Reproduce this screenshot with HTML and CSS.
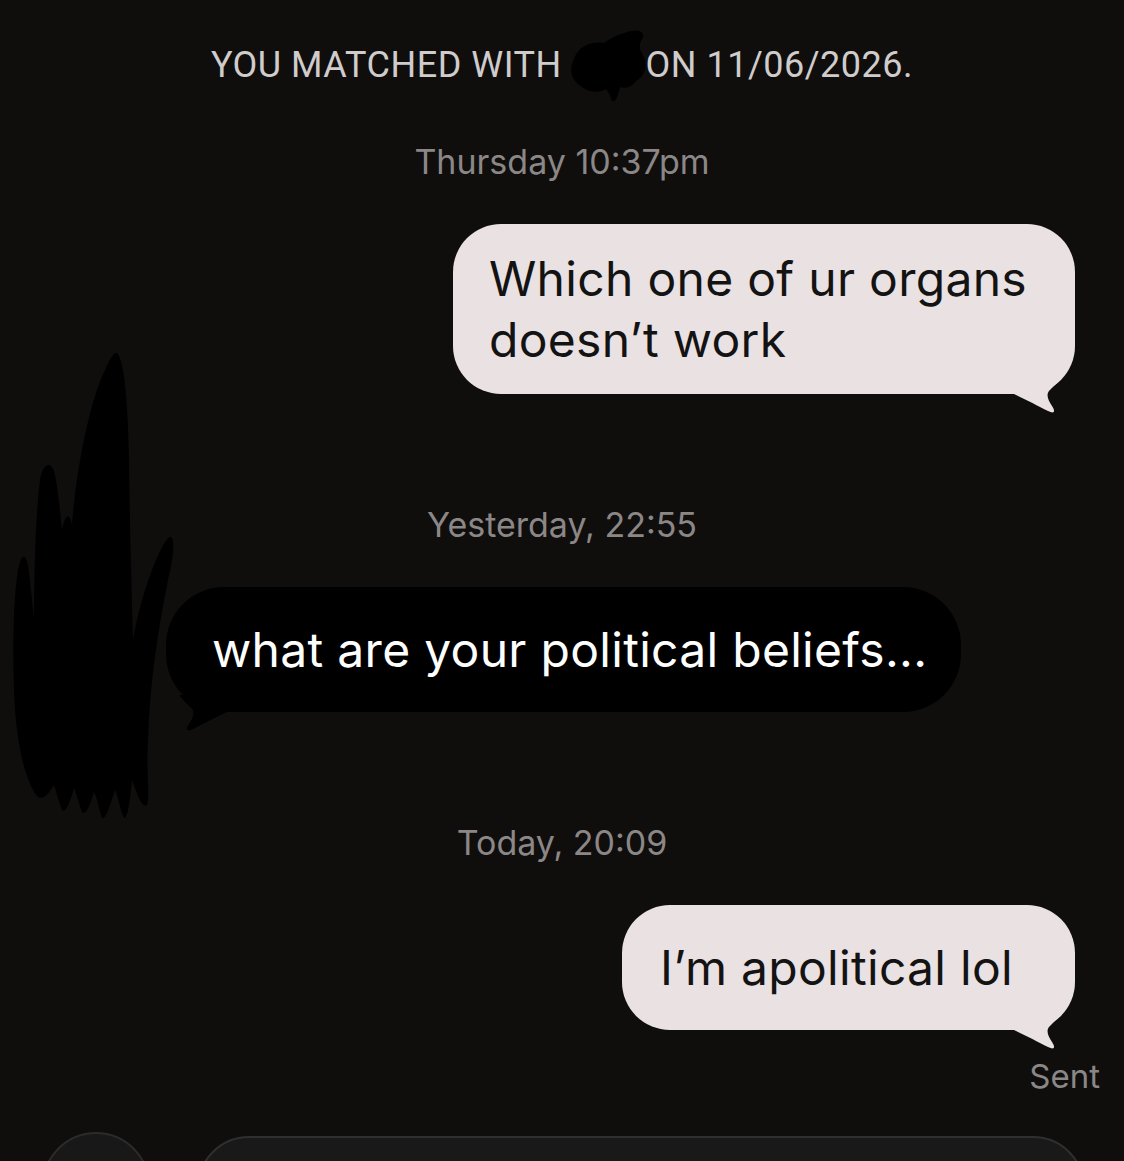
FILE: index.html
```html
<!DOCTYPE html>
<html lang="en">
<head>
    <meta charset="UTF-8">
    <meta name="viewport" content="width=device-width, initial-scale=1.0">
    <title>Chat</title>
    <link rel="stylesheet" href="styles.css">
</head>
<body>
    <div class="chat">
        <p class="match-note">YOU MATCHED WITH<span class="name-redact"><svg viewBox="0 0 90 76" width="90" height="76"><path d="M14,30 C18,18 30,12 44,14 C52,8 62,4 72,2 C80,0 86,4 82,10 C78,16 80,22 84,28 C88,38 84,48 76,52 C72,58 66,60 60,58 C58,66 56,74 52,72 C50,66 48,62 46,60 C40,64 30,64 22,58 C12,52 8,42 14,30 Z" fill="#000"/></svg></span>ON 11/06/2026.</p>

        <p class="stamp">Thursday 10:37pm</p>
        <div class="row row-sent">
            <div class="bubble bubble-sent bubble-tall">
                Which one of ur organs<br>doesn&rsquo;t work
                <svg class="tail tail-sent" viewBox="0 0 66 46" width="66" height="46"><path d="M0,23 L14,23 C25,28 38,35 48,40 C54,43 56,41 52,35 C48,29 46,24 49,20 C53,16 58,11 62,6 L0,6 Z"/></svg>
            </div>
        </div>

        <p class="stamp stamp-gap">Yesterday, 22:55</p>
        <div class="row row-received">
            <div class="bubble bubble-received">
                what are your political beliefs...
                <svg class="tail tail-received" viewBox="0 0 66 46" width="66" height="46"><path d="M66,23 L52,23 C41,28 28,35 18,40 C12,43 10,41 14,35 C18,29 20,24 17,20 C13,16 8,11 4,6 L66,6 Z"/></svg>
            </div>
        </div>

        <p class="stamp stamp-gap">Today, 20:09</p>
        <div class="row row-sent">
            <div class="bubble bubble-sent bubble-short">
                I&rsquo;m apolitical lol
                <svg class="tail tail-sent" viewBox="0 0 66 46" width="66" height="46"><path d="M0,23 L14,23 C25,28 38,35 48,40 C54,43 56,41 52,35 C48,29 46,24 49,20 C53,16 58,11 62,6 L0,6 Z"/></svg>
            </div>
        </div>
        <p class="status">Sent</p>

        <div class="composer">
            <div class="composer-btn"></div>
            <div class="composer-input"></div>
        </div>
    </div>

    <!-- redaction over the profile picture -->
    <svg class="avatar-redact" viewBox="0 0 200 490" width="200" height="490">
        <path d="M117,13 C124,20 128,60 129,120 C130,200 132,260 133,300 C140,260 155,215 168,198 C176,192 174,215 168,240 C158,290 150,340 148,400 C146,430 150,455 147,465 C142,470 136,450 132,440 C130,460 128,478 124,478 C120,470 118,455 115,450 C110,465 106,480 102,478 C98,465 96,455 94,452 C90,465 86,476 82,472 C78,460 76,452 74,448 C70,462 66,474 62,470 C58,460 56,450 54,445 C48,455 42,462 36,455 C26,440 18,410 15,370 C12,320 13,260 18,230 C21,215 25,212 28,225 C30,240 32,260 34,280 C34,230 36,170 40,140 C43,122 52,120 55,135 C58,150 60,170 62,190 C66,170 70,175 72,185 C76,130 90,60 105,30 C110,18 114,12 117,13 Z" fill="#000"/>
    </svg>
</body>
</html>
```

FILE: styles.css
```css
body {
    margin: 0;
    background-color: #0f0e0d;
    font-family: "Inter", "Roboto", sans-serif;
    overflow: hidden;
    height: 1161px;
}
.chat {
    display: flex;
    flex-direction: column;
    padding-top: 45px;
}
.match-note {
    margin: 0;
    text-align: center;
    font-family: "Roboto", sans-serif;
    font-size: 36px;
    line-height: 40px;
    letter-spacing: 0.5px;
    color: #cfcccb;
    white-space: nowrap;
}
.name-redact {
    display: inline-block;
    width: 84px;
    height: 40px;
    vertical-align: top;
}
.name-redact svg {
    display: block;
    margin: -16px 0 0 -2px;
}
.stamp {
    margin: 57px 0 0;
    text-align: center;
    font-size: 34px;
    line-height: 40px;
    color: #8c8787;
}
.stamp-gap {
    margin-top: 111px;
}
.row {
    display: flex;
    margin-top: 42px;
}
.row-sent {
    justify-content: flex-end;
    padding-right: 49px;
}
.row-received {
    justify-content: flex-start;
    padding-left: 166px;
}
.bubble {
    position: relative;
    font-size: 48px;
    line-height: 61px;
    letter-spacing: 0.3px;
    padding: 32px 48px 32px 36px;
    border-radius: 48px;
}
.bubble-sent {
    background-color: #e9e1e2;
    color: #141313;
}
.bubble-received {
    background-color: #000;
    color: #fff;
    border-radius: 58px;
    padding-left: 46px;
    padding-right: 34px;
}
.bubble-tall {
    padding-top: 24px;
    padding-bottom: 24px;
}
.bubble-short {
    padding-left: 38px;
    padding-right: 62px;
}
.tail {
    position: absolute;
    bottom: -23px;
}
.tail-sent {
    right: 9px;
    fill: #e9e1e2;
}
.tail-received {
    left: 9px;
    fill: #000;
}
.status {
    margin: 26px 24px 0 0;
    text-align: right;
    font-size: 33px;
    line-height: 40px;
    color: #8c8787;
}
.composer {
    display: flex;
    align-items: flex-start;
    gap: 47px;
    margin-top: 36px;
    padding: 0 39px 0 42px;
}
.composer-btn {
    width: 108px;
    height: 108px;
    flex-shrink: 0;
    border-radius: 50%;
    background-color: #191818;
    border: 2px solid #2c2b2b;
    box-sizing: border-box;
}
.composer-input {
    flex: 1;
    height: 110px;
    margin-top: 4px;
    border-radius: 52px;
    background-color: #1a1919;
    border: 2px solid #302f2f;
    box-sizing: border-box;
}
.avatar-redact {
    position: absolute;
    left: 0;
    top: 340px;
}
```
